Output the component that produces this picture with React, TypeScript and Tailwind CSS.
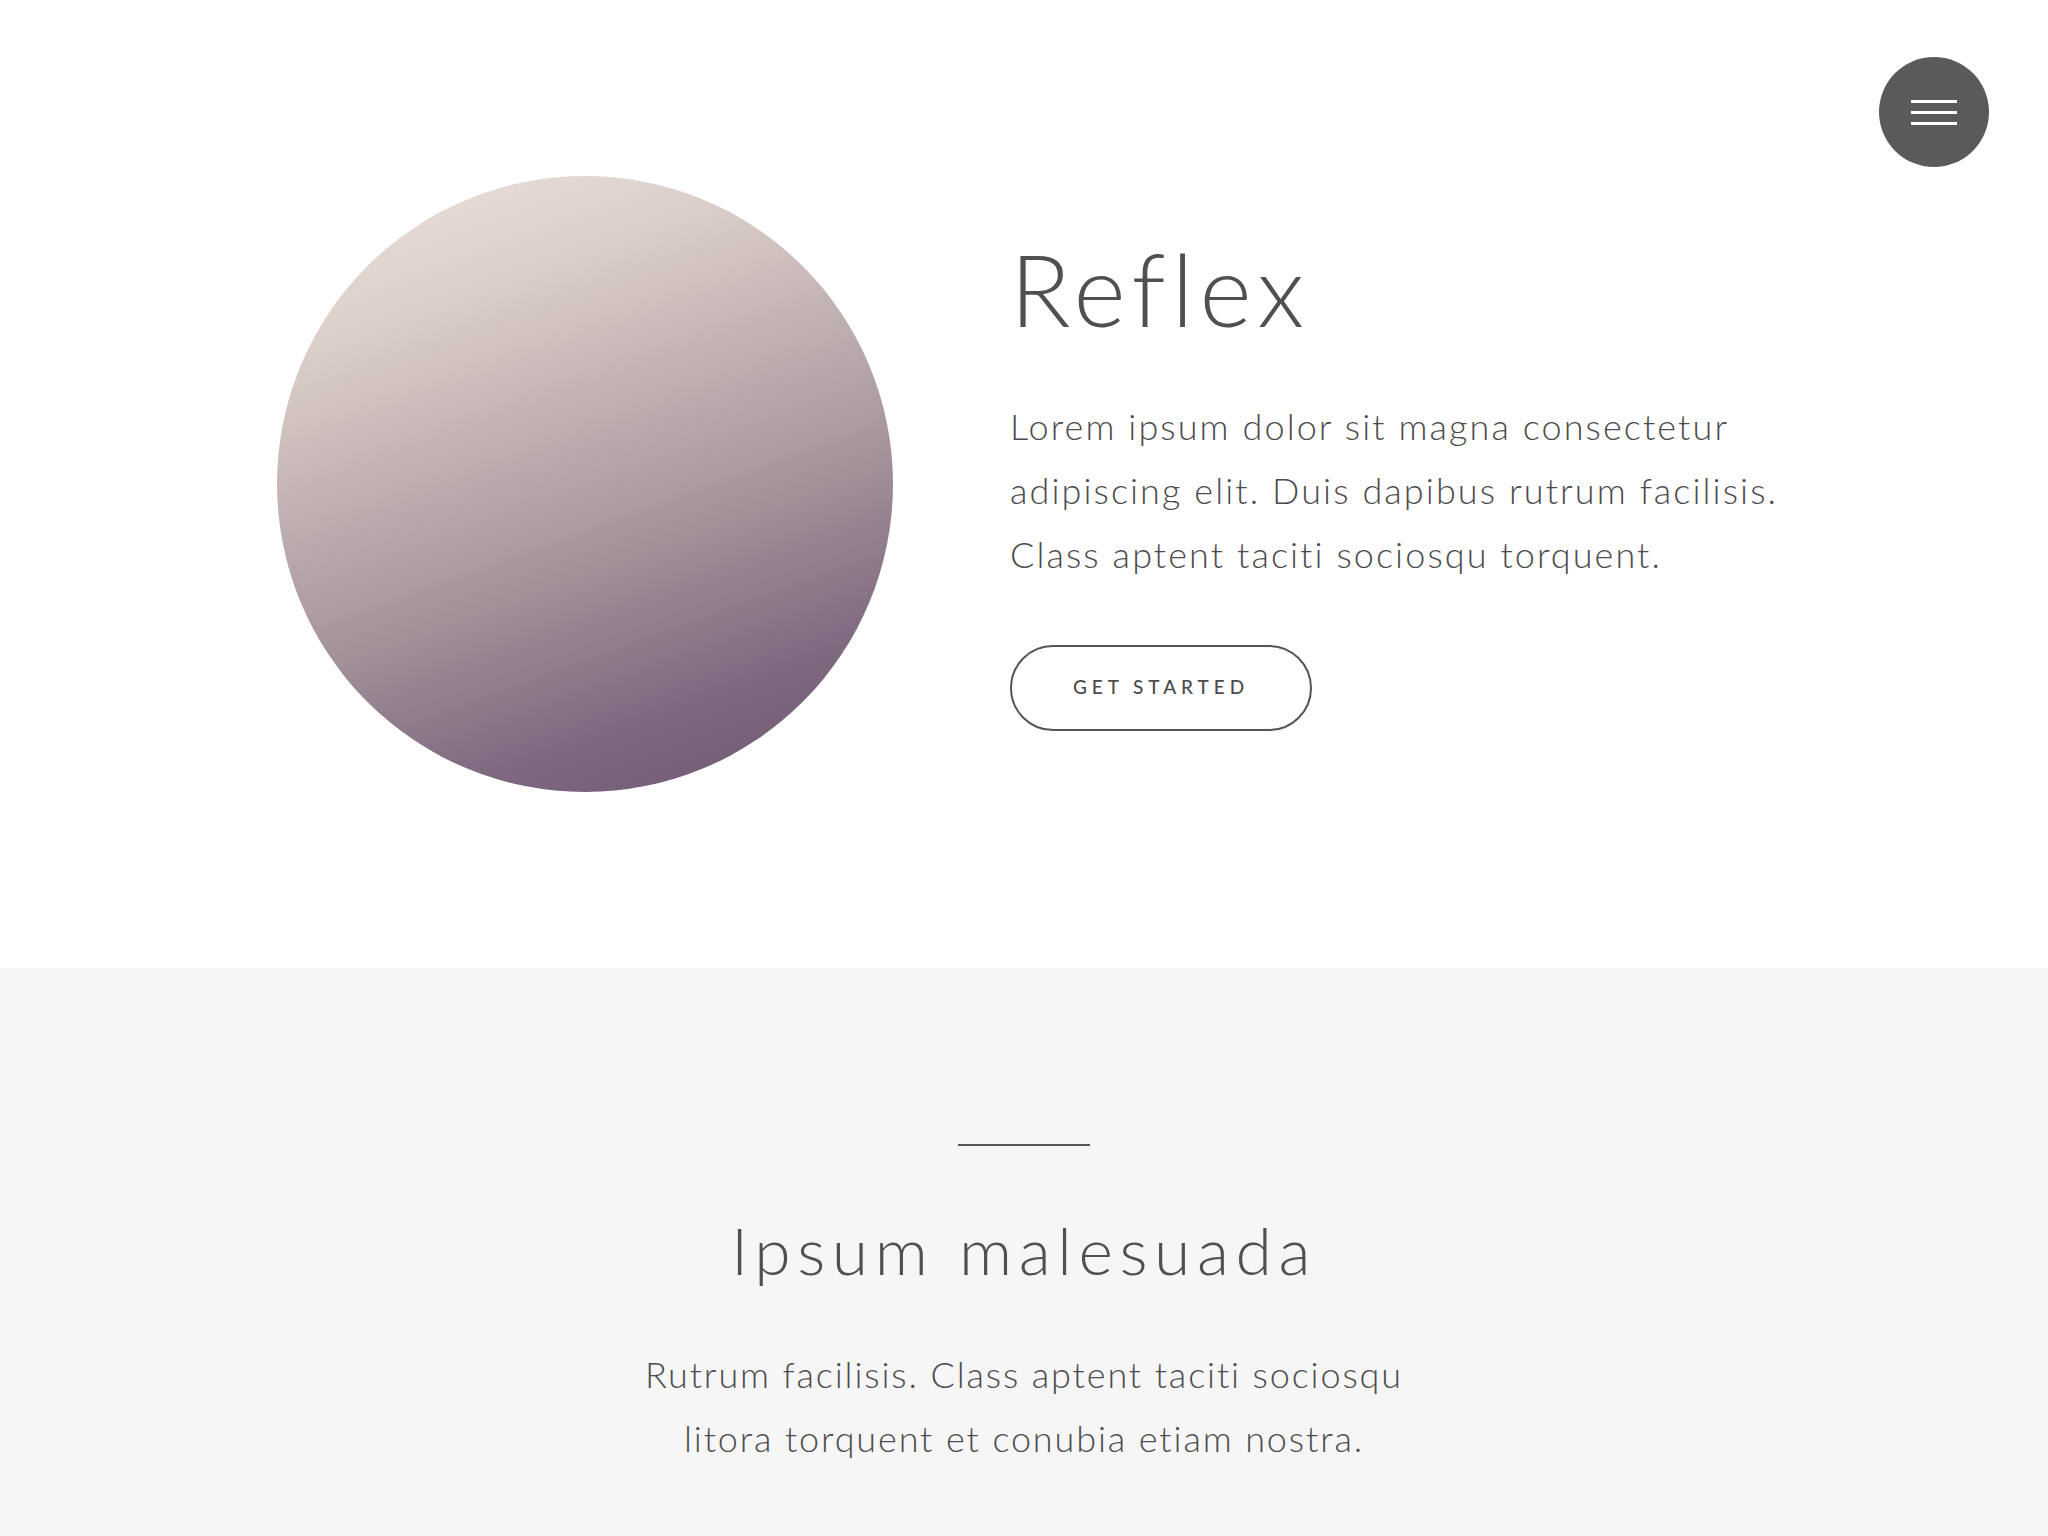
export default function App() {
  return (
    <div className="relative min-h-screen bg-white font-['Lato','Open_Sans',sans-serif] text-[#555555]">
      {/* menu toggle */}
      <button className="absolute right-[59px] top-[57px] flex h-[110px] w-[110px] flex-col items-center justify-center gap-[8px] rounded-full bg-[#5a5a5a]">
        <span className="block h-[3px] w-[46px] bg-white" />
        <span className="block h-[3px] w-[46px] bg-white" />
        <span className="block h-[3px] w-[46px] bg-white" />
      </button>

      <section className="flex h-[968px] items-center justify-center">
        <div className="flex items-center gap-[117px]">
          <div className="h-[616px] w-[616px] shrink-0 rounded-full bg-[linear-gradient(160deg,#ede5dc_0%,#dbcfc9_22%,#ab9aa0_55%,#7f6a80_80%,#6a546e_100%)]" />
          <div className="flex w-[761px] flex-col items-start">
            <h1 className="text-[100px] font-light leading-[100px] tracking-[0.06em] text-[#505050]">
              Reflex
            </h1>
            <p className="mt-[56px] whitespace-nowrap text-[36px] font-light leading-[64px] tracking-[0.058em] text-[#4c4c4c]">
              Lorem ipsum dolor sit magna consectetur
              <br />
              adipiscing elit. Duis dapibus rutrum facilisis.
              <br />
              Class aptent taciti sociosqu torquent.
            </p>
            <a
              href="#"
              className="mt-[59px] flex h-[86px] w-[302px] items-center justify-center rounded-full border-2 border-[#555555] text-[19px] font-medium uppercase tracking-[0.26em] text-[#4c4c4c]"
            >
              Get Started
            </a>
          </div>
        </div>
      </section>

      <section className="flex flex-col items-center bg-[#f6f6f6] pb-[176px] pt-[176px]">
        <div className="h-[2px] w-[132px] bg-[#555555]" />
        <h2 className="mt-[64px] text-[66px] font-light leading-[80px] tracking-[0.1em] text-[#505050]">
          Ipsum malesuada
        </h2>
        <p className="mt-[52px] whitespace-nowrap text-center text-[36px] font-light leading-[64px] tracking-[0.052em] text-[#4c4c4c]">
          Rutrum facilisis. Class aptent taciti sociosqu
          <br />
          litora torquent et conubia etiam nostra.
        </p>
      </section>
    </div>
  );
}
